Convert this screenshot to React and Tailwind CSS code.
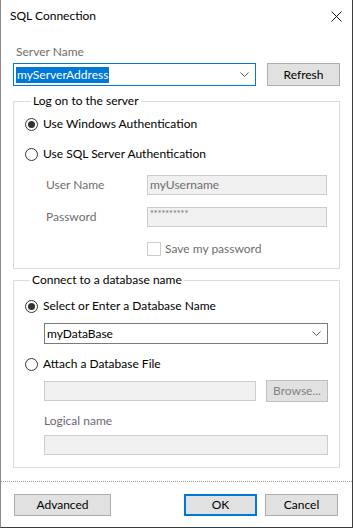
import React from "react";

function Radio({ checked, label }) {
  return (
    <div className="flex items-center h-[16px]">
      <span className="w-[13px] h-[13px] rounded-full border border-[#333333] bg-white flex items-center justify-center">
        {checked && <span className="w-[7px] h-[7px] rounded-full bg-[#333333]" />}
      </span>
      <span className="ml-[5px] text-black">{label}</span>
    </div>
  );
}

function Chevron() {
  return (
    <svg width="9" height="6" viewBox="0 0 9 6" className="shrink-0">
      <polyline points="0.5,0.5 4.5,4.5 8.5,0.5" fill="none" stroke="#5a5a5a" strokeWidth="1" />
    </svg>
  );
}

function Button({ children, primary, disabled, className = "" }) {
  return (
    <button
      type="button"
      className={`h-[22px] bg-[#e1e1e1] ${
        primary ? "border-2 border-[#0078d7]" : "border border-[#adadad]"
      } ${disabled ? "bg-[#cccccc] border-[#bfbfbf] text-[#838383]" : "text-black"} ${className}`}
    >
      {children}
    </button>
  );
}

export default function App() {
  return (
    <div
      className="w-[353px] h-[528px] bg-white border-l border-l-[#8c8c8c] border-r border-r-[#3c3c3c] border-b border-b-[#3c3c3c] text-[12px] leading-[16px] overflow-hidden flex flex-col"
      style={{ fontFamily: 'Lato, "Liberation Sans", Arial, sans-serif' }}
    >
      {/* title bar */}
      <div className="h-[32px] flex items-center justify-between pl-[9px] pr-[10px] shrink-0">
        <span className="text-black">SQL Connection</span>
        <svg width="11" height="11" viewBox="0 0 11 11">
          <path d="M0.5 0.5 L10.5 10.5 M10.5 0.5 L0.5 10.5" stroke="#111" strokeWidth="1" />
        </svg>
      </div>

      <div className="px-[12px]">
        {/* server name */}
        <div className="pl-[3px] mt-[12px] text-[#6d6d6d]">Server Name</div>
        <div className="flex items-center mt-[3px] gap-[11px]">
          <div className="w-[243px] h-[23px] border border-[#0078d7] flex items-center pl-[2px] pr-[6px]">
            <span className="bg-[#0078d7] text-white px-[1px] h-[16px] flex items-center">myServerAddress</span>
            <span className="flex-1" />
            <Chevron />
          </div>
          <Button className="w-[73px] h-[23px]">Refresh</Button>
        </div>

        {/* log on group */}
        <fieldset className="mt-[7px] border border-[#dcdcdc] pl-[11px] pr-[11px] pb-[11px]">
          <legend className="ml-[6px] px-[2px] text-black">Log on to the server</legend>
          <div className="mt-[7px]">
            <Radio checked label="Use Windows Authentication" />
          </div>
          <div className="mt-[14px]">
            <Radio label="Use SQL Server Authentication" />
          </div>
          <div className="mt-[13px] flex items-center">
            <span className="pl-[21px] w-[122px] text-[#6d6d6d]">User Name</span>
            <div className="w-[180px] h-[20px] bg-[#f0f0f0] border border-[#cccccc] flex items-center pl-[2px] text-[#6d6d6d]">
              myUsername
            </div>
          </div>
          <div className="mt-[12px] flex items-center">
            <span className="pl-[21px] w-[122px] text-[#6d6d6d]">Password</span>
            <div className="w-[180px] h-[20px] bg-[#f0f0f0] border border-[#cccccc] flex items-start pl-[2px] text-[9px] leading-[12px] text-[#6d6d6d]">
              **********
            </div>
          </div>
          <div className="mt-[14px] flex items-center pl-[122px]">
            <span className="w-[14px] h-[14px] border border-[#cccccc] bg-white" />
            <span className="ml-[4px] text-[#6d6d6d]">Save my password</span>
          </div>
        </fieldset>

        {/* database group */}
        <fieldset className="mt-[3px] border border-[#dcdcdc] pl-[11px] pr-[11px] pb-[12px]">
          <legend className="ml-[5px] px-[2px] text-black">Connect to a database name</legend>
          <div className="mt-[10px]">
            <Radio checked label="Select or Enter a Database Name" />
          </div>
          <div className="mt-[9px] ml-[19px] h-[21px] border border-[#7a7a7a] flex items-center pl-[2px] pr-[6px]">
            <span className="text-black flex-1">myDataBase</span>
            <Chevron />
          </div>
          <div className="mt-[12px]">
            <Radio label="Attach a Database File" />
          </div>
          <div className="mt-[8px] ml-[19px] flex items-center gap-[10px]">
            <div className="w-[212px] h-[20px] bg-[#f0f0f0] border border-[#cccccc]" />
            <Button disabled className="flex-1 h-[20px]">Browse...</Button>
          </div>
          <div className="mt-[11px] ml-[19px] text-[#6f6474]">Logical name</div>
          <div className="mt-[6px] ml-[19px] h-[20px] bg-[#f0f0f0] border border-[#cccccc]" />
        </fieldset>
      </div>

      {/* bottom buttons */}
      <div className="mt-[13px] border-t border-dotted border-[#a0a0a0]" />
      <div className="flex items-center pl-[13px] pr-[14px] mt-[12px]">
        <Button className="w-[97px]">Advanced</Button>
        <span className="flex-1" />
        <Button primary className="w-[73px]">OK</Button>
        <Button className="w-[73px] ml-[8px]">Cancel</Button>
      </div>
    </div>
  );
}
